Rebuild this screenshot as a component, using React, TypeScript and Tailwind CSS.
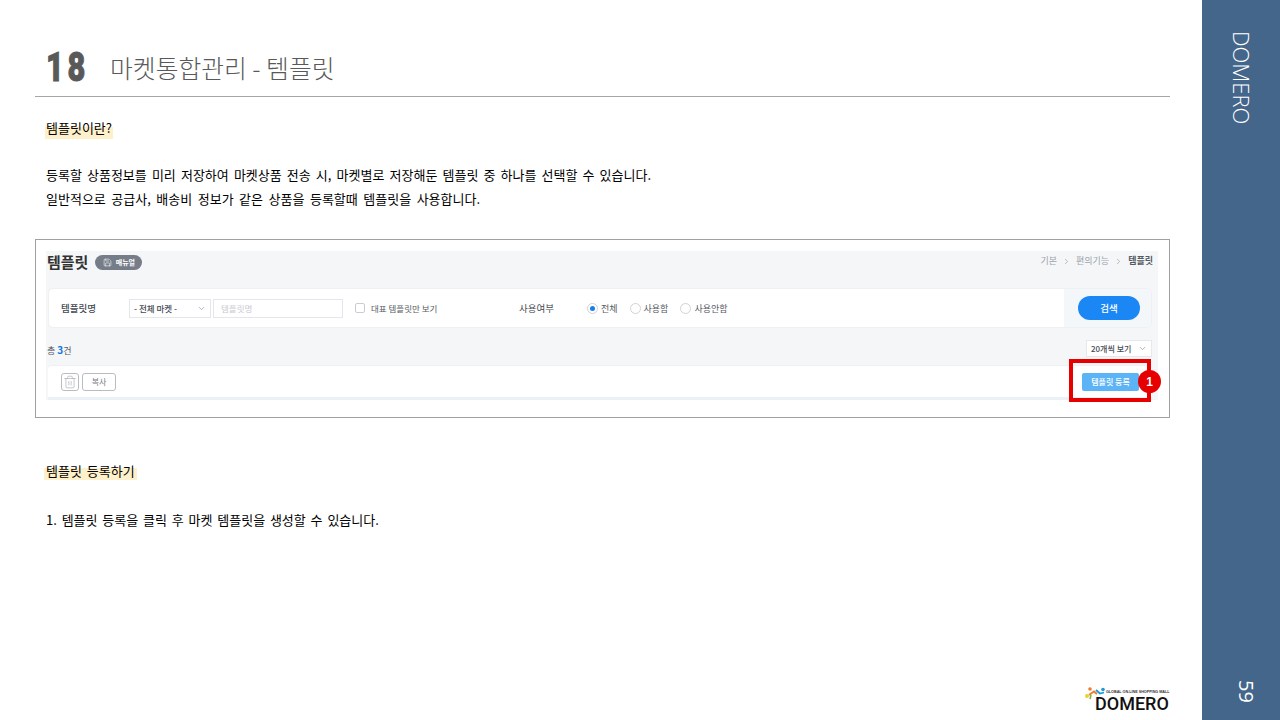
import { ChevronDown, ChevronRight, Save, Trash2 } from "lucide-react";

const body = "font-['Noto_Sans_CJK_KR','Noto_Sans',sans-serif]";
const marker = "bg-[linear-gradient(transparent_40%,#fff0cc_40%)]";

const Radio = ({ label, checked }: { label: string; checked?: boolean }) => (
  <div className="flex items-center gap-[3px]">
    <span className="w-[11px] h-[11px] rounded-full border border-[#cfd3d8] bg-white flex items-center justify-center">
      {checked && <span className="w-[5px] h-[5px] rounded-full bg-[#1b7fe8]" />}
    </span>
    <span className="text-[9px] leading-[12px] text-[#555b63]">{label}</span>
  </div>
);

const Logo = () => (
  <div className="relative w-[88px] h-[26px]">
    <svg className="absolute left-0 top-0" width="26" height="16" viewBox="0 0 26 16">
      <circle cx="8" cy="2" r="1.8" fill="#ef7d2d" />
      <path d="M7 8 L12 4.5 L15 7" stroke="#ef7d2d" strokeWidth="2" fill="none" />
      <circle cx="21" cy="2.5" r="1.8" fill="#1b9ad6" />
      <path d="M14 3 L18 6.5 L22 5.5" stroke="#1b9ad6" strokeWidth="1.8" fill="none" />
      <circle cx="5" cy="9" r="2" fill="#e8d42a" />
      <path d="M9 8 L8 12" stroke="#7aba3a" strokeWidth="1.5" fill="none" />
    </svg>
    <span className="absolute left-[24px] top-[2px] text-[3.7px] leading-[6px] font-bold text-[#333] whitespace-nowrap font-['Liberation_Sans',sans-serif]">
      GLOBAL ON-LINE SHOPPING MALL
    </span>
    <span className="absolute left-[13px] top-[7px] text-[18px] leading-[20px] font-medium text-[#111] font-['Roboto',sans-serif]">
      DOMERO
    </span>
  </div>
);

export default function App() {
  return (
    <div className={`w-[1280px] h-[720px] flex overflow-hidden bg-white ${body}`}>
      <main className="w-[1202px] h-full flex flex-col pl-[35px] pr-[32px]">
        <header className="h-[97px] border-b border-[#a6a6a6] flex items-end pb-[8px] pl-[11px]">
          <span className="w-[64px] text-[41px] leading-[42px] font-black text-[#595959] font-['Roboto',sans-serif] tracking-[5px] origin-left scale-x-[0.75] [-webkit-text-stroke:1px_#595959]">
            18
          </span>
          <span className="mb-[3px] text-[24.8px] leading-[36px] font-light text-[#595959]">마켓통합관리 - 템플릿</span>
        </header>

        <div className="pl-[11px] pt-[22px] text-[13px] leading-[24px] text-black">
          <div className="h-[20px] flex -ml-[1px]">
            <span className={`h-[20px] leading-[18px] px-[1px] [word-spacing:2px] ${marker}`}>템플릿이란?</span>
          </div>
          <p className="mt-[24px] whitespace-nowrap [word-spacing:2.2px]">
            등록할 상품정보를 미리 저장하여 마켓상품 전송 시, 마켓별로 저장해둔 템플릿 중 하나를 선택할 수 있습니다.
          </p>
          <p className="whitespace-nowrap [word-spacing:2.6px]">일반적으로 공급사, 배송비 정보가 같은 상품을 등록할때 템플릿을 사용합니다.</p>
        </div>

        <section className="relative mt-[28px] h-[179px] border border-[#a0a0a0] pl-[10px] pr-[11px] pt-[11px]">
          <div className="h-[149px] bg-[#f4f6f8] flex flex-col">
            <div className="h-[37px] flex items-start justify-between">
              <div className="flex items-center gap-[7px] pl-[1px]">
                <span className="text-[15px] leading-[22px] font-bold text-[#333]">템플릿</span>
                <span className="h-[15px] w-[47px] rounded-full bg-[#767d88] text-white text-[7px] font-bold flex items-center justify-center gap-[4px]">
                  <Save className="w-[9px] h-[9px]" strokeWidth={1.5} />
                  매뉴얼
                </span>
              </div>
              <div className="flex items-center pr-[5px] pt-[4px] text-[9px] leading-[12px] text-[#a0a5ab]">
                기본
                <ChevronRight className="w-[9px] h-[9px] mx-[5px]" />
                편의기능
                <ChevronRight className="w-[9px] h-[9px] mx-[5px]" />
                <span className="font-bold text-[#555b63]">템플릿</span>
              </div>
            </div>

            <div className="ml-[2px] mr-[6px] h-[40px] rounded-[5px] bg-white border border-[#eef0f3] flex overflow-hidden">
              <div className="flex-1 flex items-center pl-[12px]">
                <span className="w-[68px] text-[9.5px] font-medium text-[#444a52]">템플릿명</span>
                <div className="w-[82px] h-[19px] border border-[#e3e6ea] flex items-center justify-between px-[4px] text-[8.5px] font-medium text-[#444a52]">
                  - 전체 마켓 -
                  <ChevronDown className="w-[9px] h-[9px] text-[#9aa0a6]" />
                </div>
                <div className="ml-[2px] w-[130px] h-[19px] border border-[#e3e6ea] flex items-center px-[7px] text-[8.5px] text-[#c6cacf]">
                  템플릿명
                </div>
                <span className="ml-[12px] w-[10px] h-[10px] rounded-[2px] border border-[#c9cdd2]" />
                <span className="ml-[6px] w-[148px] text-[8.5px] text-[#555b63]">대표 템플릿만 보기</span>
                <span className="w-[68px] text-[9.5px] text-[#444a52]">사용여부</span>
                <div className="flex items-center gap-[12px] pt-[1px]">
                  <Radio label="전체" checked />
                  <Radio label="사용함" />
                  <Radio label="사용안함" />
                </div>
              </div>
              <div className="w-[87px] bg-[#f4f7fa] flex items-center pl-[14px]">
                <span className="w-[62px] h-[24px] rounded-full bg-[#1b87f5] text-white text-[9.5px] font-medium flex items-center justify-center">
                  검색
                </span>
              </div>
            </div>

            <div className="h-[37px] flex items-end justify-between pb-[8px] pr-[6px] pl-[1px]">
              <span className="text-[9px] leading-[12px] text-[#555b63]">
                총 <b className="text-[10px] text-[#1477e0]">3</b>건
              </span>
              <div className="w-[66px] h-[17px] bg-white border border-[#e6e8ec] flex items-center justify-between px-[4px] text-[8px] font-medium text-[#444a52]">
                20개씩 보기
                <ChevronDown className="w-[9px] h-[9px] text-[#9aa0a6]" />
              </div>
            </div>

            <div className="ml-[2px] mr-[6px] h-[35px] bg-white border-t border-t-[#eef0f3] border-b-[3px] border-b-[#eaf1f7] rounded-t-[4px] flex items-center justify-between pl-[13px] pr-[13px]">
              <div className="flex items-center gap-[3px]">
                <span className="w-[18px] h-[18px] rounded-[3px] border border-[#b9bdc2] flex items-center justify-center">
                  <Trash2 className="w-[14px] h-[14px] text-[#a5a9ae]" strokeWidth={1.1} />
                </span>
                <span className="w-[34px] h-[18px] rounded-[3px] border border-[#b9bdc2] flex items-center justify-center text-[8px] text-[#777d84]">
                  복사
                </span>
              </div>
              <span className="w-[57px] h-[18px] rounded-[2px] bg-[#5cb3f6] text-white text-[8px] font-medium flex items-center justify-center">
                템플릿 등록
              </span>
            </div>
          </div>

          <div className="absolute left-[1033px] top-[119px] w-[82px] h-[43px] border-[4px] border-[#e60000]" />
          <span className="absolute left-[1102px] top-[130px] w-[23px] h-[23px] rounded-full bg-[#e60000] text-white text-[12px] font-bold flex items-center justify-center font-['Liberation_Sans',sans-serif]">
            1
          </span>
        </section>

        <div className="pl-[11px] pt-[42px] text-[13px] text-black">
          <div className="h-[20px] flex -ml-[2px]">
            <span className={`h-[20px] leading-[22px] px-[2px] [word-spacing:2px] ${marker}`}>템플릿 등록하기</span>
          </div>
          <p className="mt-[28px] leading-[24px] whitespace-nowrap [word-spacing:1.9px]">1. 템플릿 등록을 클릭 후 마켓 템플릿을 생성할 수 있습니다.</p>
        </div>

        <div className="mt-auto mb-[7px] flex justify-end">
          <Logo />
        </div>
      </main>

      <aside className="w-[78px] h-full bg-[#44668a] flex flex-col items-center justify-between text-white pt-[31px] pb-[17px] pl-[1px]">
        <span className="[writing-mode:vertical-rl] text-[22px] leading-[28px] font-light font-['Open_Sans',sans-serif]">
          DOMERO
        </span>
        <span className="[writing-mode:vertical-rl] ml-[9px] text-[20px] leading-[24px] font-['Open_Sans',sans-serif]">59</span>
      </aside>
    </div>
  );
}
